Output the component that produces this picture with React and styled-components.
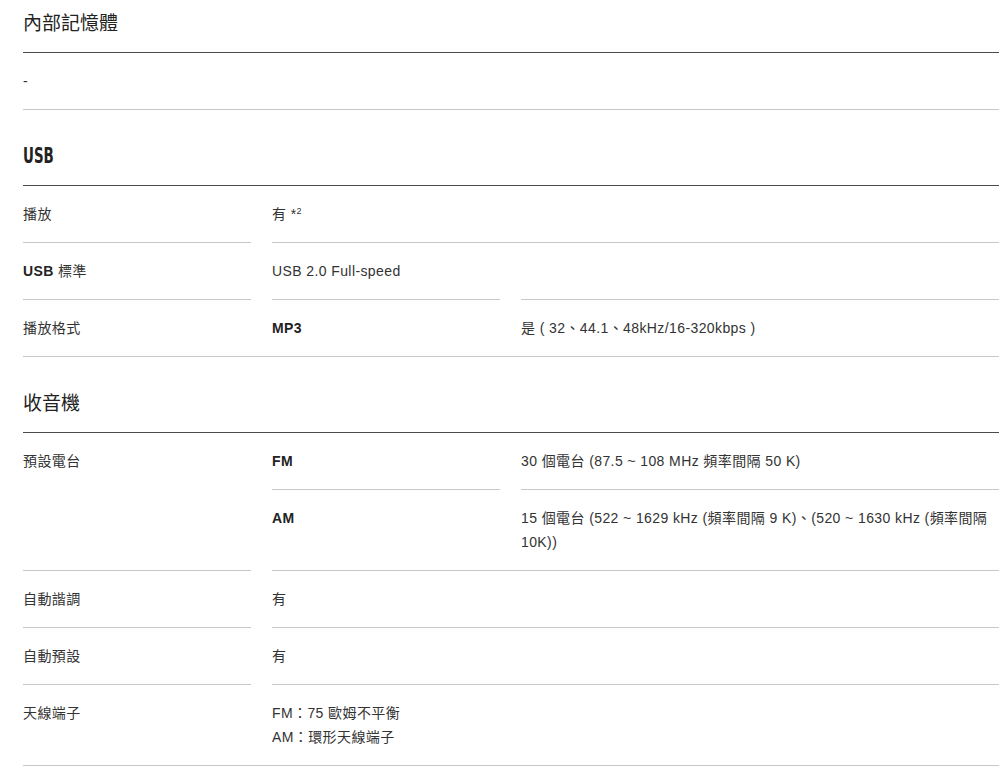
import React from 'react';
import styled, { createGlobalStyle } from 'styled-components';

const GlobalStyle = createGlobalStyle`
  body {
    margin: 0;
    background: #fff;
    font-family: "Liberation Sans", Arial, "Noto Sans CJK TC", sans-serif;
    color: #333;
  }
`;

const Page = styled.div`
  display: flex;
  flex-direction: column;
  gap: 29px;
  padding: 6px 3px 0 23px;
`;

const Section = styled.section`
  display: flex;
  flex-direction: column;
`;

const Heading = styled.h2`
  margin: 0;
  height: 32px;
  padding-bottom: 14px;
  border-bottom: 1px solid #4a4a4a;
  font-family: "Noto Sans CJK TC", sans-serif;
  font-size: 19px;
  font-weight: normal;
  line-height: 32px;
  color: #222;
  overflow: hidden;
`;

// narrow bold latin heading, like the condensed face of the original
const HeadingLatin = styled.span`
  display: inline-block;
  font-family: "DejaVu Sans Condensed", "DejaVu Sans", sans-serif;
  font-size: 21px;
  font-weight: bold;
  line-height: 32px;
  transform: scaleX(0.71);
  transform-origin: left center;
`;

const Table = styled.div`
  display: grid;
  grid-template-columns: 228px 228px 1fr;
  column-gap: 21px;
  border-bottom: 1px solid #c8c8c8;
`;

const Cell = styled.div`
  grid-column: ${p => p.$span ? `span ${p.$span}` : 'auto'};
  grid-row: ${p => p.$rows ? `span ${p.$rows}` : 'auto'};
  padding: 16px 0;
  border-top: ${p => p.$first ? 'none' : '1px solid #c8c8c8'};
  font-size: 14px;
  line-height: 24px;
  letter-spacing: 0.4px;
  color: #333;
  b {
    font-weight: bold;
    color: #222;
  }
  sup {
    font-size: 9px;
    line-height: 0;
    vertical-align: 5px;
  }
`;

export default function App() {
  return (
    <>
      <GlobalStyle />
      <Page>
        <Section>
          <Heading>內部記憶體</Heading>
          <Table>
            <Cell $first $span={3}>-</Cell>
          </Table>
        </Section>

        <Section>
          <Heading><HeadingLatin>USB</HeadingLatin></Heading>
          <Table>
            <Cell $first>播放</Cell>
            <Cell $first $span={2}>有 *<sup>2</sup></Cell>

            <Cell><b>USB</b> 標準</Cell>
            <Cell $span={2}>USB 2.0 Full-speed</Cell>

            <Cell>播放格式</Cell>
            <Cell><b>MP3</b></Cell>
            <Cell>是 ( 32、44.1、48kHz/16-320kbps )</Cell>
          </Table>
        </Section>

        <Section>
          <Heading>收音機</Heading>
          <Table>
            <Cell $first $rows={2}>預設電台</Cell>
            <Cell $first><b>FM</b></Cell>
            <Cell $first>30 個電台 (87.5 ~ 108 MHz 頻率間隔 50 K)</Cell>
            <Cell><b>AM</b></Cell>
            <Cell>15 個電台 (522 ~ 1629 kHz (頻率間隔 9 K)、(520 ~ 1630 kHz (頻率間隔 10K))</Cell>

            <Cell>自動諧調</Cell>
            <Cell $span={2}>有</Cell>

            <Cell>自動預設</Cell>
            <Cell $span={2}>有</Cell>

            <Cell>天線端子</Cell>
            <Cell $span={2}>
              FM：75 歐姆不平衡<br />
              AM：環形天線端子
            </Cell>
          </Table>
        </Section>
      </Page>
    </>
  );
}
